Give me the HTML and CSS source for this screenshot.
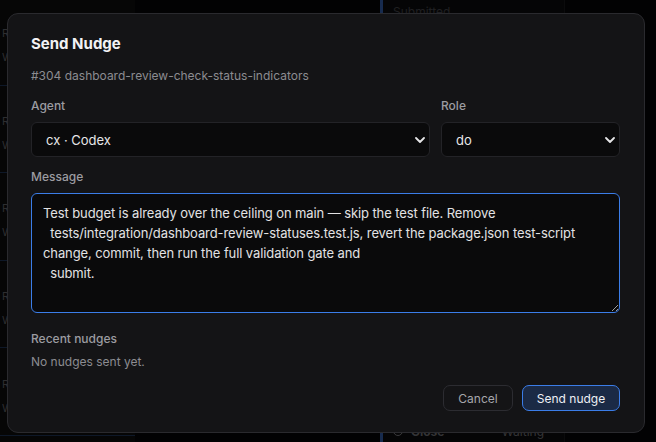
FILE: index.html
```html
<!DOCTYPE html>
<html lang="en">
<head>
  <meta charset="UTF-8">
  <meta name="viewport" content="width=device-width, initial-scale=1.0">
  <title>Send Nudge</title>
  <link rel="stylesheet" href="styles.css">
</head>
<body>
  <div class="board">
    <div class="lane lane-left">
      <div class="task"><span>Release</span><span>Waiting</span></div>
      <div class="task"><span>Release</span><span>Waiting</span></div>
      <div class="task"><span>Release</span><span>Waiting</span></div>
      <div class="task"><span>Release</span><span>Waiting</span></div>
      <div class="task"><span>Release</span><span>Waiting</span></div>
    </div>
    <div class="lane lane-mid"></div>
    <div class="lane lane-right">
      <div class="step active">Submitted</div>
      <div class="spacer"></div>
      <div class="step"><span class="ring"></span><b>Close</b><span class="state">Waiting</span></div>
    </div>
  </div>

  <div class="overlay">
    <div class="modal">
      <h2 class="modal-title">Send Nudge</h2>
      <p class="modal-sub">#304 dashboard-review-check-status-indicators</p>

      <div class="row">
        <label class="field field-agent">
          <span class="label">Agent</span>
          <span class="select-wrap">
            <select class="select">
              <option>cx · Codex</option>
            </select>
            <svg class="chevron" width="10" height="6" viewBox="0 0 10 6" fill="none" stroke="currentColor" stroke-width="1.8" stroke-linecap="round" stroke-linejoin="round"><path d="M1 1l4 4 4-4"/></svg>
          </span>
        </label>
        <label class="field field-role">
          <span class="label">Role</span>
          <span class="select-wrap">
            <select class="select">
              <option>do</option>
            </select>
            <svg class="chevron" width="10" height="6" viewBox="0 0 10 6" fill="none" stroke="currentColor" stroke-width="1.8" stroke-linecap="round" stroke-linejoin="round"><path d="M1 1l4 4 4-4"/></svg>
          </span>
        </label>
      </div>

      <label class="field">
        <span class="label">Message</span>
        <textarea class="message">Test budget is already over the ceiling on main — skip the test file. Remove
  tests/integration/dashboard-review-statuses.test.js, revert the package.json test-script
change, commit, then run the full validation gate and
  submit.</textarea>
      </label>

      <div class="recent">
        <span class="label">Recent nudges</span>
        <p class="empty">No nudges sent yet.</p>
      </div>

      <div class="actions">
        <button type="button" class="btn btn-ghost">Cancel</button>
        <button type="button" class="btn btn-primary">Send nudge</button>
      </div>
    </div>
  </div>
</body>
</html>
```

FILE: styles.css
```css
* {
  box-sizing: border-box;
  margin: 0;
  padding: 0;
}

body {
  width: 656px;
  height: 442px;
  overflow: hidden;
  background: #050506;
  font-family: Inter, 'Noto Sans', sans-serif;
  color: #e6e6e8;
  position: relative;
}

/* faint board behind the dialog */
.board {
  display: flex;
  height: 100%;
}

.lane-left {
  width: 135px;
  display: flex;
  flex-direction: column;
  gap: 8px;
  padding: 6px 0;
  background: #0b0b0c;
}

.task {
  height: 80px;
  border-bottom: 1px solid #1b2c4a;
  display: flex;
  flex-direction: column;
  justify-content: center;
  gap: 10px;
  padding-left: 2px;
  font-size: 11px;
  color: #55555a;
}

.lane-mid {
  width: 245px;
}

.lane-right {
  width: 185px;
  display: flex;
  flex-direction: column;
  border-left: 3px solid #2b4f8f;
  border-right: 1px solid #141416;
  background: #0a0a0b;
}

.step {
  display: flex;
  align-items: center;
  gap: 8px;
  height: 22px;
  padding-left: 10px;
  font-size: 12px;
  color: #5f5f63;
}

.step.active {
  color: #3a3a3e;
}

.step .state {
  margin-left: auto;
  margin-right: 20px;
}

.ring {
  width: 10px;
  height: 10px;
  border: 1px solid #6a6a6e;
  border-radius: 50%;
}

.spacer {
  flex: 1;
}

.overlay {
  position: absolute;
  inset: 0;
  background: rgba(0, 0, 0, 0.45);
}

.modal {
  position: absolute;
  left: 7px;
  top: 13px;
  width: 638px;
  height: 420px;
  background: #141416;
  border: 1px solid #2a2a2e;
  border-radius: 11px;
  padding: 20px 24px 20px 23px;
  display: flex;
  flex-direction: column;
}

.modal-title {
  font-size: 15px;
  line-height: 20px;
  font-weight: 700;
  color: #f2f2f4;
}

.modal-sub {
  margin-top: 14px;
  font-size: 12px;
  line-height: 16px;
  color: #8c8c91;
}

.row {
  display: flex;
  gap: 11px;
  margin-top: 14px;
}

.field {
  display: flex;
  flex-direction: column;
  gap: 8px;
}

.field-agent {
  flex: 1;
}

.field-role {
  width: 179px;
}

.label {
  font-size: 12px;
  line-height: 16px;
  font-weight: 500;
  color: #9c9ca1;
}

.select-wrap {
  position: relative;
  display: block;
}

.select {
  appearance: none;
  width: 100%;
  height: 35px;
  background: #0a0a0b;
  border: 1px solid #232327;
  border-radius: 6px;
  padding: 0 14px;
  font-family: inherit;
  font-size: 13px;
  color: #e6e6e8;
  outline: none;
}

.chevron {
  position: absolute;
  right: 5px;
  top: 15px;
  color: #e6e6e8;
}

.row + .field {
  margin-top: 12px;
}

.message {
  height: 120px;
  background: #0a0a0b;
  border: 1px solid #3b7de8;
  border-radius: 6px;
  padding: 9px 11px;
  font-family: inherit;
  font-size: 13px;
  letter-spacing: -0.1px;
  line-height: 20px;
  color: #e2e2e4;
  resize: vertical;
  outline: none;
}

.recent {
  margin-top: 18px;
  display: flex;
  flex-direction: column;
  gap: 7px;
}

.empty {
  font-size: 12px;
  line-height: 16px;
  color: #8c8c91;
}

.actions {
  display: flex;
  justify-content: flex-end;
  gap: 9px;
  margin-top: 15px;
}

.btn {
  height: 26px;
  padding: 0;
  border-radius: 7px;
  font-family: inherit;
  font-size: 12px;
  cursor: pointer;
}

.btn-ghost {
  background: transparent;
  border: 1px solid #2c2c31;
  color: #a6a6ab;
  width: 70px;
}

.btn-primary {
  background: #1b2a45;
  border: 1px solid #3b7de8;
  color: #eef0f4;
  width: 98px;
}
```
